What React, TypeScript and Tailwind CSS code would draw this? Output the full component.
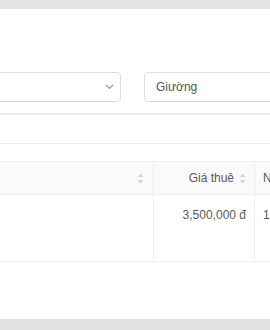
import React from 'react';

function SortIcon() {
  return (
    <svg width="7" height="11" viewBox="0 0 7 11" className="shrink-0">
      <path d="M3.5 0.5 L6.5 4 L0.5 4 Z" fill="#d6d6d6" />
      <path d="M3.5 10.5 L6.5 7 L0.5 7 Z" fill="#d6d6d6" />
    </svg>
  );
}

export default function App() {
  return (
    <div
      className="w-[270px] h-[330px] overflow-hidden bg-white flex flex-col text-[#595959]"
      style={{ fontFamily: '"Liberation Sans", Arial, sans-serif' }}
    >
      <div className="h-[9px] shrink-0 bg-[#e4e4e4]" />

      {/* filters */}
      <div className="mt-[63px] flex gap-[23px] ml-[-30px] shrink-0">
        <div className="w-[151px] h-[30px] shrink-0 border border-[#dcdcdc] rounded-[4px] flex items-center justify-end pr-[6px]">
          <svg width="9" height="6" viewBox="0 0 9 6">
            <path d="M1 1 L4.5 4.5 L8 1" fill="none" stroke="#999" strokeWidth="1.2" />
          </svg>
        </div>
        <div className="w-[150px] h-[30px] shrink-0 border border-[#dcdcdc] rounded-[4px] flex items-center pl-[11px] text-[12px] text-[#555]">
          Giường
        </div>
      </div>

      <div className="mt-[11px] h-[2px] shrink-0 bg-[#ececec]" />
      <div className="mt-[28px] h-px shrink-0 bg-[#ececec]" />

      {/* table */}
      <div className="mt-[17px] ml-[-40px] shrink-0 text-[12px]">
        <div className="flex h-[34px] bg-[#fafafa] border-t border-b border-[#efefef]">
          <div className="w-[194px] shrink-0 flex items-center justify-end pr-[9px] border-r border-[#efefef]">
            <SortIcon />
          </div>
          <div className="w-[101px] shrink-0 flex items-center justify-end gap-[5px] pr-[8px] border-r border-[#efefef]">
            <span>Giá thuê</span>
            <SortIcon />
          </div>
          <div className="flex-1 flex items-center pl-[8px]">Ngày</div>
        </div>
        <div className="flex h-[67px] border-b border-[#efefef]">
          <div className="w-[194px] shrink-0 border-r border-[#efefef]" />
          <div className="w-[101px] shrink-0 flex justify-end pt-[11px] pr-[8px] border-r border-[#efefef]">
            3,500,000 đ
          </div>
          <div className="flex-1 pt-[11px] pl-[8px]">1</div>
        </div>
      </div>

      <div className="flex-1" />
      <div className="h-[11px] shrink-0 bg-[#e2e2e2]" />
    </div>
  );
}
